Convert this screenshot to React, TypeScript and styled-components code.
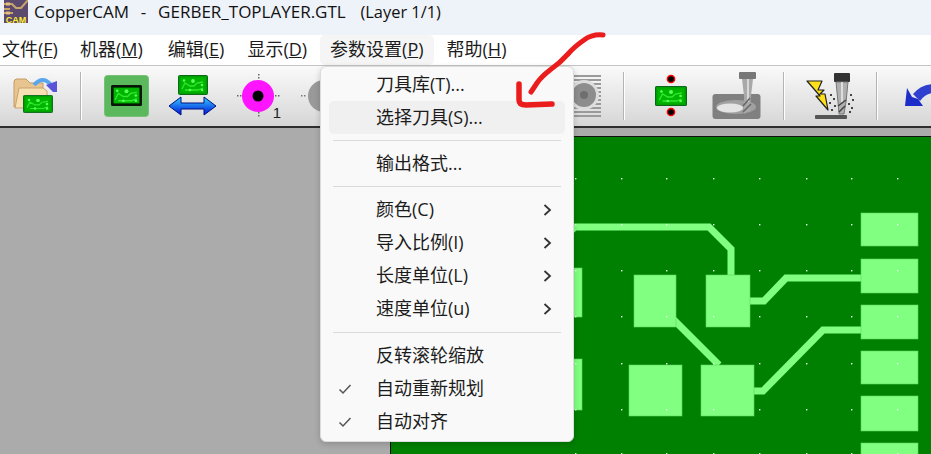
import React from 'react';
import styled, { createGlobalStyle } from 'styled-components';

const UI_FONT = `'Open Sans', 'Noto Sans CJK SC', sans-serif`;

const GlobalStyle = createGlobalStyle`
  html, body {
    margin: 0;
    padding: 0;
    background: #ababab;
  }
`;

const Window = styled.div`
  position: relative;
  width: 931px;
  height: 454px;
  overflow: hidden;
  display: flex;
  flex-direction: column;
  font-family: ${UI_FONT};
  color: #1c1c1c;
`;

const TitleBar = styled.div`
  height: 35px;
  flex: none;
  display: flex;
  align-items: flex-start;
  gap: 6px;
  padding-left: 4px;
  background: #eef2f9;
`;

const TitleText = styled.span`
  font-size: 17px;
  line-height: 24px;
  white-space: pre;
  word-spacing: 1.5px;
  color: #111;
`;

const TitleLayer = styled.span`
  margin-left: -3px;
  font-size: 16.4px;
  word-spacing: 0;
`;

const MenuBar = styled.div`
  height: 30px;
  flex: none;
  display: flex;
  background: #fff;
  border-bottom: 1px solid #c4c4c4;
`;

const MenuTitle = styled.div<{ $ml: number; $active?: boolean }>`
  margin-left: ${({ $ml }) => $ml}px;
  padding: 0 10px;
  height: 30px;
  line-height: 29px;
  font-size: 18px;
  white-space: nowrap;
  border-radius: 5px;
  background: ${({ $active }) => ($active ? '#f5f5f5' : 'transparent')};
`;

const Toolbar = styled.div`
  height: 60px;
  flex: none;
  display: flex;
  align-items: center;
  overflow: hidden;
  background: linear-gradient(#fafafa, #d6d6d6);
  border-bottom: 2px solid #2e2e2e;
`;

const Tool = styled.span<{ $ml: number; $w: number }>`
  flex: none;
  display: flex;
  margin-left: ${({ $ml }) => $ml}px;
  width: ${({ $w }) => $w}px;
`;

const ToolSep = styled.span<{ $ml: number }>`
  flex: none;
  width: 2px;
  height: 48px;
  margin-left: ${({ $ml }) => $ml}px;
  background: #b4b4b4;
  border-right: 1px solid #fff;
  box-sizing: border-box;
`;

const Workspace = styled.div`
  flex: 1;
  min-height: 0;
  display: flex;
  padding: 8px 0 0 390px;
  background: #ababab;
`;

const BoardFrame = styled.div`
  flex: 1;
  min-width: 0;
  background: #008000;
  border-top: 1px solid #111;
  border-left: 1px solid #111;
`;

const BoardSvg = styled.svg`
  display: block;
`;

const Menu = styled.div`
  position: absolute;
  left: 320px;
  top: 66px;
  width: 254px;
  height: 376px;
  box-sizing: border-box;
  padding: 1px 8px 0;
  background: #f9f9f9;
  border: 1px solid #dcdcdc;
  border-radius: 6px;
  box-shadow: 0 2px 6px rgba(0, 0, 0, 0.18);
`;

const MenuRow = styled.div<{ $hover?: boolean }>`
  position: relative;
  height: 33px;
  line-height: 33px;
  padding-left: 47px;
  font-size: 18px;
  white-space: nowrap;
  border-radius: 5px;
  background: ${({ $hover }) => ($hover ? '#f0f0f0' : 'transparent')};
`;

const MenuSep = styled.div<{ $top?: number }>`
  height: 1px;
  margin: ${({ $top = 6 }) => $top}px 4px 6px;
  background: #dadada;
`;

const RowMark = styled.svg`
  position: absolute;
  left: 9px;
  top: 11px;
`;

const RowChevron = styled.svg`
  position: absolute;
  right: 13px;
  top: 11px;
`;

const Annotation = styled.svg`
  position: absolute;
  left: 510px;
  top: 25px;
  pointer-events: none;
`;

const PcbIcon: React.FC<{ x: number; y: number; w: number; h: number; dark?: boolean }> = ({ x, y, w, h, dark }) => (
  <svg x={x} y={y} width={w} height={h} viewBox="0 0 30 20" preserveAspectRatio="none">
    <rect x="0.5" y="0.5" width="29" height="19" rx="1" fill={dark ? '#001a00' : '#00a000'} stroke={dark ? '#111' : '#0a6a1a'} />
    <rect x="2.5" y="2.5" width="25" height="15" fill="#00b400" />
    <path d="M4 14 L7 8 L12 11 H16 L19 8 L25 7 M7 15 H20 L25 13" fill="none" stroke="#2ee82e" strokeWidth="1.3" />
    <circle cx="6" cy="5.5" r="1.3" fill="#55ff55" />
    <circle cx="15" cy="6" r="1.9" fill="#55ff55" />
    <circle cx="24" cy="10" r="1.3" fill="#55ff55" />
    <circle cx="12" cy="15" r="1.3" fill="#55ff55" />
    <circle cx="24" cy="15" r="1.3" fill="#55ff55" />
  </svg>
);

const AppLogo = () => (
  <svg width="24" height="23" viewBox="0 0 24 23">
    <rect width="24" height="23" fill="#5c4a6e" />
    <path d="M0 4H8L12 8H17L24 0M0 13H9M0 9H6" fill="none" stroke="#c9a56a" strokeWidth="2" />
    <rect x="2" y="2.5" width="4" height="3" fill="#e0c080" />
    <rect x="2" y="11.5" width="4" height="3" fill="#e0c080" />
    <text x="12" y="22.5" textAnchor="middle" fontFamily="'Liberation Sans', sans-serif" fontWeight="700" fontSize="9" fill="#ffee33">CAM</text>
  </svg>
);

const FolderIcon = () => (
  <svg width="46" height="38" viewBox="0 0 46 38">
    <path d="M1 30V5Q1 2 4 2H13L17 6H30V30Z" fill="#e8c48f" stroke="#c49a66" />
    <path d="M2 31L6 11H30L34 14V31Z" fill="#f6e0b4" stroke="#c9a36e" />
    <path d="M21 8Q30 -2 38 8" fill="none" stroke="#5aa6ee" strokeWidth="4" />
    <path d="M33 8L44 4V15L40 15Z" fill="#5a55d8" />
    <PcbIcon x={10} y={18} w={30} h={18} />
  </svg>
);

const ActiveBoardIcon = () => (
  <svg width="45" height="42" viewBox="0 0 45 42">
    <rect x="0.5" y="0.5" width="44" height="41" rx="3" fill="#5cb85c" stroke="#78c078" />
    <PcbIcon x={7} y={10} w={31} h={21} dark />
  </svg>
);

const MirrorIcon = () => (
  <svg width="49" height="42" viewBox="0 0 49 42">
    <PcbIcon x={10} y={0} w={30} h={20} />
    <defs>
      <linearGradient id="arrowFill" x1="0" x2="0" y1="0" y2="1">
        <stop offset="0" stopColor="#35d0ff" />
        <stop offset="1" stopColor="#0010d8" />
      </linearGradient>
    </defs>
    <path d="M1 31L13 22V28H36V22L48 31L36 40V34H13V40Z" fill="url(#arrowFill)" stroke="#001080" />
  </svg>
);

const ticks = (cx: number, cy: number, r: number) => (
  <g fill="#666">
    {[-4, -1].map(d => (
      <React.Fragment key={d}>
        <rect x={cx - r + d} y={cy} width="1.5" height="1.5" />
        <rect x={cx + r + d + 4} y={cy} width="1.5" height="1.5" />
        <rect x={cx} y={cy - r + d} width="1.5" height="1.5" />
        <rect x={cx} y={cy + r + d + 4} width="1.5" height="1.5" />
      </React.Fragment>
    ))}
  </g>
);

const PadIcon = () => (
  <svg width="48" height="48" viewBox="0 0 48 48">
    {ticks(24, 23, 17)}
    <circle cx="24" cy="24" r="16" fill="#ff14ff" />
    <circle cx="24" cy="24" r="5.5" fill="#000" />
    <text x="43" y="46" textAnchor="middle" fontFamily="'Liberation Sans', sans-serif" fontSize="15" fill="#222">1</text>
  </svg>
);

const GrayPadIcon = () => (
  <svg width="42" height="42" viewBox="0 0 42 42">
    <rect x="1" y="20" width="1.5" height="1.5" fill="#777" />
    <rect x="4" y="20" width="1.5" height="1.5" fill="#777" />
    <circle cx="24" cy="21" r="16" fill="#999" />
  </svg>
);

const HoleIcon = () => (
  <svg width="27" height="44" viewBox="0 0 27 44">
    {Array.from({ length: 11 }, (_, i) => (
      <rect key={i} x="0" y={1 + i * 4} width="27" height="2" fill="#9a9a9a" />
    ))}
    <circle cx="10" cy="21" r="15" fill="#ddd" />
    <circle cx="10" cy="21" r="12" fill="#8d8d8d" />
    <circle cx="10" cy="21" r="4" fill="#6f6f6f" />
  </svg>
);

const DrillBoardIcon = () => (
  <svg width="32" height="44" viewBox="0 0 32 44">
    <circle cx="16" cy="5" r="3.6" fill="#000" stroke="#f00" strokeWidth="1.5" />
    <PcbIcon x={0} y={12} w={32} h={20} />
    <circle cx="16" cy="38" r="3.6" fill="#000" stroke="#f00" strokeWidth="1.5" />
  </svg>
);

const MillIcon = () => (
  <svg width="49" height="48" viewBox="0 0 49 48">
    <rect x="0.5" y="22" width="48" height="25" rx="3" fill="#808080" />
    <ellipse cx="24" cy="35" rx="20" ry="7" fill="#a0a0a0" />
    <ellipse cx="18" cy="36" rx="13" ry="4.5" fill="#e4e4e4" />
    <rect x="27" y="0" width="17" height="7" rx="1" fill="#777" />
    <path d="M30 7H41L39 24L38 38L32 42L32 24Z" fill="#a9a9a9" />
    <path d="M36 7V30" stroke="#d8d8d8" strokeWidth="2" />
    <path d="M31 34L38 26M31 40L39 32" stroke="#666" strokeWidth="1.5" />
  </svg>
);

const CutIcon = () => (
  <svg width="48" height="48" viewBox="0 0 48 48">
    <path d="M1 9H16L12 18H18L14 22H19L22 38L10 24H14L8 17Z" fill="#ffe01a" stroke="#222" strokeWidth="1.2" strokeLinejoin="round" />
    <rect x="28" y="1" width="16" height="9" rx="1" fill="#333" />
    <path d="M30 10H42L40 30L38 42H33L32 30Z" fill="#b0b0b0" stroke="#777" />
    <path d="M36 10V30" stroke="#eee" strokeWidth="1.5" />
    <path d="M32 34L40 28M33 40L39 34" stroke="#444" strokeWidth="1.5" />
    <g fill="#444">
      {[[24, 22], [27, 26], [23, 30], [28, 33], [25, 37], [44, 22], [46, 27], [42, 31], [45, 35], [43, 39]].map(([x, y]) => (
        <rect key={`${x}-${y}`} x={x} y={y} width="2" height="2" />
      ))}
    </g>
    <rect x="9" y="43" width="32" height="4" rx="1" fill="#555" />
  </svg>
);

const UndoIcon = () => (
  <svg width="30" height="30" viewBox="0 0 30 30">
    <path d="M9 13Q17 3 30 3V12Q22 12 16 20Z" fill="#2f3fd0" />
    <path d="M3 7L1 25H19L14 18L8 16Z" fill="#1c2cc8" />
  </svg>
);

const GRID_X = [575, 621, 666, 713, 759, 806, 851, 897];
const GRID_Y = [178, 224, 270, 316, 363, 409, 453];

const PADS = [
  [540, 268, 42, 49],
  [540, 359, 42, 51],
  [634, 275, 42, 52],
  [706, 275, 44, 52],
  [629, 365, 53, 51],
  [701, 365, 53, 51],
  [861, 213, 57, 33],
  [861, 259, 57, 34],
  [861, 305, 57, 34],
  [861, 351, 57, 33],
  [861, 396, 57, 35],
  [861, 443, 57, 30],
];

const TRACES = [
  'M540 260L575 227H709L731 249V276',
  'M749 301H764L786 278H862',
  'M669 315L719 365',
  'M753 391H763L823 330H862',
];

const Board = () => (
  <BoardSvg width="540" height="317" viewBox="391 137 540 317">
    {TRACES.map(d => (
      <path key={d} d={d} fill="none" stroke="#80ff80" strokeWidth="7" />
    ))}
    {PADS.map(([x, y, w, h]) => (
      <rect key={`${x}-${y}`} x={x} y={y} width={w} height={h} fill="#80ff80" stroke="#5fd85f" strokeWidth="0.6" />
    ))}
    {GRID_Y.map(y =>
      GRID_X.map(x => <rect key={`${x}-${y}`} x={x} y={y} width="1.4" height="1.4" fill="#e8ffe8" />),
    )}
  </BoardSvg>
);

const Check = () => (
  <RowMark width="14" height="12" viewBox="0 0 14 12">
    <path d="M1.5 6.5L5 10L12.5 2" fill="none" stroke="#555" strokeWidth="1.5" />
  </RowMark>
);

const Chevron = () => (
  <RowChevron width="9" height="12" viewBox="0 0 9 12">
    <path d="M1.5 1L7 6L1.5 11" fill="none" stroke="#333" strokeWidth="1.8" />
  </RowChevron>
);

const App: React.FC = () => (
  <>
    <GlobalStyle />
    <Window>
      <TitleBar>
        <AppLogo />
        <TitleText>
          {'CopperCAM  -  GERBER_TOPLAYER.GTL   '}
          <TitleLayer>(Layer 1/1)</TitleLayer>
        </TitleText>
      </TitleBar>
      <MenuBar>
        <MenuTitle $ml={-8}>文件(<u>F</u>)</MenuTitle>
        <MenuTitle $ml={2}>机器(<u>M</u>)</MenuTitle>
        <MenuTitle $ml={5}>编辑(<u>E</u>)</MenuTitle>
        <MenuTitle $ml={3}>显示(<u>D</u>)</MenuTitle>
        <MenuTitle $ml={3} $active>参数设置(<u>P</u>)</MenuTitle>
        <MenuTitle $ml={3}>帮助(<u>H</u>)</MenuTitle>
      </MenuBar>
      <Toolbar>
        <Tool $ml={13} $w={46}><FolderIcon /></Tool>
        <ToolSep $ml={21} />
        <Tool $ml={22} $w={45}><ActiveBoardIcon /></Tool>
        <Tool $ml={19} $w={49}><MirrorIcon /></Tool>
        <Tool $ml={17} $w={48}><PadIcon /></Tool>
        <Tool $ml={18} $w={42}><GrayPadIcon /></Tool>
        <Tool $ml={232} $w={27}><HoleIcon /></Tool>
        <ToolSep $ml={22} />
        <Tool $ml={30} $w={32}><DrillBoardIcon /></Tool>
        <Tool $ml={25} $w={49}><MillIcon /></Tool>
        <ToolSep $ml={22} />
        <Tool $ml={21} $w={48}><CutIcon /></Tool>
        <ToolSep $ml={22} />
        <Tool $ml={26} $w={30}><UndoIcon /></Tool>
      </Toolbar>
      <Workspace>
        <BoardFrame>
          <Board />
        </BoardFrame>
      </Workspace>
      <Menu>
        <MenuRow>刀具库(T)...</MenuRow>
        <MenuRow $hover>选择刀具(S)...</MenuRow>
        <MenuSep />
        <MenuRow>输出格式...</MenuRow>
        <MenuSep />
        <MenuRow>颜色(C)<Chevron /></MenuRow>
        <MenuRow>导入比例(I)<Chevron /></MenuRow>
        <MenuRow>长度单位(L)<Chevron /></MenuRow>
        <MenuRow>速度单位(u)<Chevron /></MenuRow>
        <MenuSep $top={7} />
        <MenuRow>反转滚轮缩放</MenuRow>
        <MenuRow><Check />自动重新规划</MenuRow>
        <MenuRow><Check />自动对齐</MenuRow>
      </Menu>
      <Annotation width="100" height="90" viewBox="510 25 100 90">
        <path d="M603 35Q592 34 584 40Q574 47 568 54Q560 63 550 70Q541 77 537 83L531 92" fill="none" stroke="#ea1c1c" strokeWidth="5" strokeLinecap="round" />
        <path d="M519 84V100Q519 105 526 105L552 104" fill="none" stroke="#ea1c1c" strokeWidth="5.5" strokeLinecap="round" />
      </Annotation>
    </Window>
  </>
);

export default App;
